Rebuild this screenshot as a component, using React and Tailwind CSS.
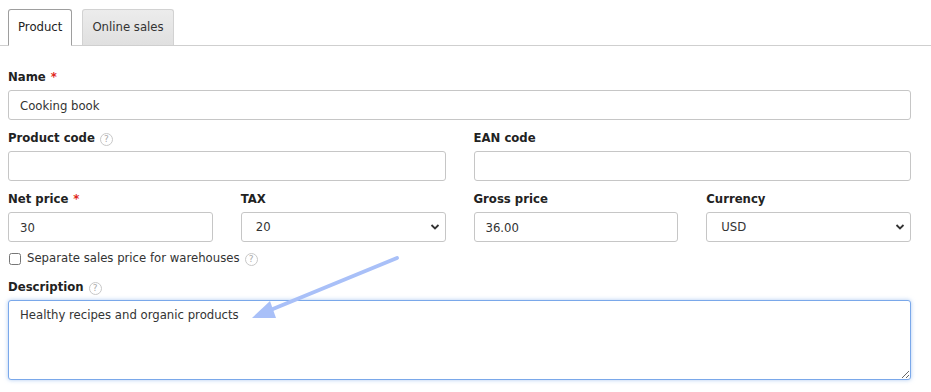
import React from "react";

function Help() {
  return (
    <span className="inline-flex items-center justify-center w-[13px] h-[13px] rounded-full border border-[#c8c8c8] text-[9px] leading-none text-[#aaa] font-normal ml-[5px] align-middle">
      ?
    </span>
  );
}

function Label({ children, required, help }) {
  return (
    <div className="flex items-center h-[16px] mb-[4px] text-[11.7px] font-bold text-[#222]">
      <span>{children}</span>
      {required && <span className="text-[#e0261b] ml-[5px]">*</span>}
      {help && <Help />}
    </div>
  );
}

function TextInput({ value }) {
  return (
    <input
      type="text"
      defaultValue={value}
      className="block w-full h-[30px] px-[11px] pt-[1px] border border-[#c6c6c6] rounded-[3px] bg-white text-[11.7px] text-[#333] outline-none"
    />
  );
}

function Select({ value }) {
  return (
    <div className="relative">
      <select
        defaultValue={value}
        className="block w-full h-[30px] pl-[14px] pr-6 pt-[1px] border border-[#c6c6c6] rounded-[3px] bg-white text-[11.7px] text-[#333] outline-none appearance-none"
      >
        <option>{value}</option>
      </select>
      <svg
        className="absolute right-[6px] top-[11px] pointer-events-none"
        width="10"
        height="8"
        viewBox="0 0 10 8"
      >
        <path d="M1.5 2 L5 5.5 L8.5 2" fill="none" stroke="#333" strokeWidth="1.8" />
      </svg>
    </div>
  );
}

export default function App() {
  return (
    <div className="relative w-[931px] h-[392px] bg-white overflow-hidden font-['DejaVu_Sans',Verdana,sans-serif] text-[#333]">

      {/* Tabs */}
      <div className="flex items-end gap-[10px] px-[8px] pt-[9px] border-b border-[#cfcfcf] h-[46px]">
        <div className="h-[37px] -mb-px px-[9px] flex items-center bg-white border border-[#9e9e9e] border-b-white rounded-t-[3px] text-[11.7px] text-[#222]">
          Product
        </div>
        <div className="h-[36px] px-[9px] flex items-center bg-gradient-to-b from-[#ececec] to-[#e0e0e0] border border-[#d2d2d2] border-b-0 rounded-t-[3px] text-[11.7px] text-[#333]">
          Online sales
        </div>
      </div>

      {/* Form */}
      <div className="pl-[8px] pr-[20px] pt-[24px]">

        <div>
          <Label required>Name</Label>
          <TextInput value="Cooking book" />
        </div>

        <div className="grid grid-cols-2 gap-x-[28px] mt-[11px]">
          <div>
            <Label help>Product code</Label>
            <TextInput value="" />
          </div>
          <div>
            <Label>EAN code</Label>
            <TextInput value="" />
          </div>
        </div>

        <div className="grid grid-cols-4 gap-x-[28px] mt-[11px]">
          <div>
            <Label required>Net price</Label>
            <TextInput value="30" />
          </div>
          <div>
            <Label>TAX</Label>
            <Select value="20" />
          </div>
          <div>
            <Label>Gross price</Label>
            <TextInput value="36.00" />
          </div>
          <div>
            <Label>Currency</Label>
            <Select value="USD" />
          </div>
        </div>

        <label className="flex items-center h-[14px] mt-[10px] text-[11.7px] text-[#333]">
          <input type="checkbox" className="w-[12px] h-[12px] ml-[1px] mr-[6px] m-0" />
          <span>Separate sales price for warehouses</span>
          <Help />
        </label>

        <div className="mt-[14px]">
          <Label help>Description</Label>
          <textarea
            defaultValue="Healthy recipes and organic products"
            className="block w-full h-[80px] px-[11px] pt-[6px] border border-[#7aa8ea] rounded-[3px] bg-white text-[11.7px] text-[#333] outline-none shadow-[0_0_4px_rgba(122,168,234,0.6)] resize"
          />
        </div>
      </div>

      {/* Annotation arrow */}
      <svg className="absolute left-0 top-0 pointer-events-none" width="931" height="392">
        <line x1="397" y1="258" x2="268" y2="311" stroke="#a9c0f8" strokeWidth="4" strokeLinecap="round" />
        <polygon points="252,318 270,301 276,318" fill="#a9c0f8" />
      </svg>
    </div>
  );
}
